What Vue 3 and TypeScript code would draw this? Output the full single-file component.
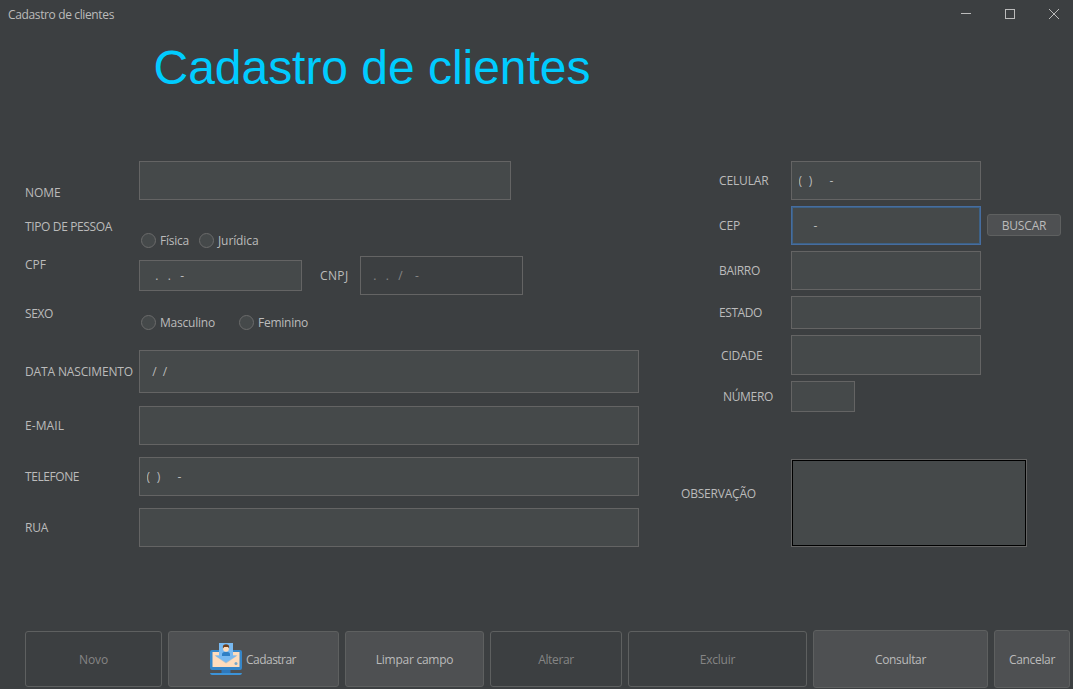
<script setup lang="ts">
import { ref } from 'vue'

// Adjusts tracking so that a caption fills the given advance width.
const vFit = {
  mounted(el: HTMLElement, binding: { value: number }) {
    const natural = el.getBoundingClientRect().width
    const count = (el.textContent ?? '').length
    if (count > 0) el.style.letterSpacing = `${((binding.value - natural) / count).toFixed(3)}px`
  },
}

interface Action {
  id: string
  text: string
  width: number
  disabled?: boolean
  icon?: boolean
}

const actions: Action[] = [
  { id: 'novo', text: 'Novo', width: 29, disabled: true },
  { id: 'cadastrar', text: 'Cadastrar', width: 50, icon: true },
  { id: 'limpar', text: 'Limpar campo', width: 77.5 },
  { id: 'alterar', text: 'Alterar', width: 35.5, disabled: true },
  { id: 'excluir', text: 'Excluir', width: 35.5, disabled: true },
  { id: 'consultar', text: 'Consultar', width: 51 },
  { id: 'cancelar', text: 'Cancelar', width: 46 },
]

const nome = ref('')
const cpf = ref('   .   .   -  ')
const cnpj = ref('  .   .   /    -  ')
const nascimento = ref('  /  /    ')
const email = ref('')
const telefone = ref('(  )     -    ')
const rua = ref('')
const celular = ref('(  )     -    ')
const cep = ref('     -   ')
const bairro = ref('')
const estado = ref('')
const cidade = ref('')
const numero = ref('')
const observacao = ref('')
</script>

<template>
  <div class="window">
    <header class="titlebar">
      <span v-fit="106" class="caption">Cadastro de clientes</span>
      <div class="controls">
        <svg viewBox="0 0 44 28"><path d="M17 13.5h10" /></svg>
        <svg viewBox="0 0 44 28"><rect x="17.5" y="9.5" width="9" height="9" /></svg>
        <svg viewBox="0 0 44 28"><path d="M17 9l10 10M27 9l-10 10" /></svg>
      </div>
    </header>

    <h1>Cadastro de clientes</h1>

    <main>
      <section class="left">
        <div class="row nome">
          <div class="label"><span v-fit="35.5">NOME</span></div>
          <input v-model="nome" type="text" />
        </div>
        <div class="row tipo">
          <div class="label"><span v-fit="87">TIPO DE PESSOA</span></div>
          <label class="radio fisica"><i></i><span v-fit="29">Física</span></label>
          <label class="radio"><i></i><span v-fit="40.5">Jurídica</span></label>
        </div>
        <div class="row docs">
          <div class="label"><span v-fit="21">CPF</span></div>
          <input v-model="cpf" class="cpf" type="text" />
          <div class="label cnpj-label"><span v-fit="28.5">CNPJ</span></div>
          <input v-model="cnpj" class="cnpj" type="text" disabled />
        </div>
        <div class="row sexo">
          <div class="label"><span v-fit="28">SEXO</span></div>
          <label class="radio masc"><i></i><span v-fit="55">Masculino</span></label>
          <label class="radio"><i></i><span v-fit="50">Feminino</span></label>
        </div>
        <div class="row data">
          <div class="label"><span v-fit="108">DATA NASCIMENTO</span></div>
          <input v-model="nascimento" type="text" />
        </div>
        <div class="row email">
          <div class="label"><span v-fit="39">E-MAIL</span></div>
          <input v-model="email" type="text" />
        </div>
        <div class="row line">
          <div class="label"><span v-fit="54">TELEFONE</span></div>
          <input v-model="telefone" class="phone" type="text" />
        </div>
        <div class="row line">
          <div class="label"><span v-fit="23">RUA</span></div>
          <input v-model="rua" type="text" />
        </div>
      </section>

      <section class="right">
        <div class="row">
          <div class="label"><span v-fit="49.5">CELULAR</span></div>
          <input v-model="celular" class="phone" type="text" />
        </div>
        <div class="row">
          <div class="label"><span v-fit="21">CEP</span></div>
          <input v-model="cep" class="focused" type="text" />
          <button class="buscar" type="button"><span v-fit="44.5">BUSCAR</span></button>
        </div>
        <div class="row">
          <div class="label"><span v-fit="41">BAIRRO</span></div>
          <input v-model="bairro" type="text" />
        </div>
        <div class="row estado">
          <div class="label"><span v-fit="43">ESTADO</span></div>
          <input v-model="estado" type="text" />
        </div>
        <div class="row cidade">
          <div class="label"><span v-fit="41.5">CIDADE</span></div>
          <input v-model="cidade" type="text" />
        </div>
        <div class="row numero">
          <div class="label"><span v-fit="50">NÚMERO</span></div>
          <input v-model="numero" type="text" />
        </div>
        <div class="row obs">
          <div class="label"><span v-fit="75">OBSERVAÇÃO</span></div>
          <textarea v-model="observacao"></textarea>
        </div>
      </section>
    </main>

    <footer>
      <button v-for="a in actions" :key="a.id" type="button" :class="a.id" :disabled="a.disabled">
        <svg v-if="a.icon" class="icon" viewBox="0 0 32 32">
          <rect x="0" y="7" width="32" height="20" rx="2" fill="#3586c9" />
          <rect x="2.5" y="9" width="27" height="15" fill="#ffdcbc" />
          <rect x="11.5" y="27" width="9" height="3" fill="#2e78bb" />
          <path d="M0 30h32q-.4 2-2 2H2q-1.600 0-2-2z" fill="#3c93d8" />
          <path d="M4.500 12.500L16 20.500l11.500-8z" fill="#b9c4c8" />
          <path d="M9 0h14v12.500h4L16 19.500 5 12.500h4z" fill="#78b9f1" />
          <path d="M12 13v-1.500Q12 9 14.500 9h3Q20 9 20 11.500V13z" fill="#2f7fc5" />
          <ellipse cx="16" cy="5.500" rx="2.900" ry="3.300" fill="#ffdcbc" />
          <path d="M12.900 5.500V3Q13.300 1.200 16 1.200T19.100 3v2.500L18 3.900h-3.700z" fill="#70401c" />
          <circle cx="26" cy="20.500" r="1.500" fill="#79a7c9" />
        </svg>
        <span v-fit="a.width">{{ a.text }}</span>
      </button>
    </footer>
  </div>
</template>

<style>
html,
body {
  margin: 0;
  background: #3c3f41;
  overflow: hidden;
}
</style>

<style scoped>
* {
  box-sizing: border-box;
}
.window {
  width: 1073px;
  height: 689px;
  overflow: hidden;
  display: flex;
  flex-direction: column;
  background: #3c3f41;
  color: #bbbbbb;
  font: 12px/16px 'Open Sans', 'Noto Sans', sans-serif;
}
span {
  white-space: nowrap;
}
.titlebar {
  height: 30px;
  flex: none;
  display: flex;
  justify-content: space-between;
  padding-left: 8px;
}
.caption {
  margin-top: 7px;
  align-self: flex-start;
}
.controls {
  display: flex;
  margin-right: -3px;
}
.controls svg {
  width: 44px;
  height: 28px;
  fill: none;
  stroke: #bbbbbb;
  stroke-width: 1;
}
h1 {
  margin: 10px 0 0 153.5px;
  height: 121px;
  flex: none;
  font: 400 48px/56px 'Liberation Sans', Arial, sans-serif;
  letter-spacing: -0.03px;
  color: #00ccff;
}
main {
  display: flex;
  height: 469px;
  flex: none;
}
.left {
  width: 657px;
  padding-left: 25px;
}
.right {
  width: 416px;
  padding-left: 24px;
}
.row {
  display: flex;
  align-items: flex-start;
}
.label {
  flex: none;
}
.left .label {
  width: 114px;
  margin-top: 12px;
}
.right .label {
  width: 110px;
  padding-left: 38px;
  margin-top: 12px;
}
input,
textarea {
  display: block;
  margin: 0;
  height: 39px;
  padding: 0 6px;
  border: 1px solid #646464;
  border-radius: 0;
  outline: none;
  background: #45494a;
  color: #bbbbbb;
  font: inherit;
  resize: none;
}
.phone {
  padding-left: 6.500px;
  word-spacing: 0.3px;
}
.left input {
  width: 500px;
}
.right input {
  width: 190px;
}
.right .row {
  margin-bottom: 6px;
}
.nome {
  height: 39px;
}
.row.nome .label {
  margin-top: 24px;
}
.left .nome input {
  width: 372px;
}
.tipo {
  height: 31px;
  margin-top: 18px;
}
.row.tipo .label,
.row.sexo .label {
  margin-top: 1px;
}
.radio {
  display: flex;
  align-items: flex-start;
  height: 16px;
}
.radio i {
  width: 15px;
  height: 15px;
  margin: 0 4px 0 2px;
  border: 1px solid #6b6b6b;
  border-radius: 50%;
  background: #45494a;
}
.tipo .radio {
  margin-top: 15px;
}
.fisica {
  width: 58px;
}
.docs {
  margin-top: 7px;
}
.row.docs .label {
  margin-top: 1px;
}
.left .docs .cpf {
  width: 163px;
  height: 31px;
  margin-top: 4px;
}
.row.docs .cnpj-label {
  width: 58px;
  padding-left: 18px;
  margin-top: 12px;
}
.left .docs .cnpj {
  width: 163px;
}
input:disabled {
  background: #3c3f41;
  color: #858585;
}
.sexo {
  height: 26px;
  margin-top: 10px;
}
.sexo .radio {
  margin-top: 10px;
}
.masc {
  width: 98px;
}
.data {
  margin-top: 19px;
}
.row.data .label {
  margin-top: 14px;
}
.data input {
  height: 43px;
}
.email {
  margin-top: 13px;
}
.line {
  margin-top: 12px;
}
.right input.focused {
  border-color: #466da0;
  box-shadow: inset 0 0 0 1px #3d6185;
}
.row.estado .label {
  margin-top: 9px;
}
.estado input {
  height: 33px;
}
.row.cidade .label {
  margin-top: 13px;
  padding-left: 40px;
}
.cidade input {
  height: 40px;
}
.row.numero .label {
  margin-top: 8px;
  padding-left: 42px;
}
.right .numero input {
  width: 64px;
  height: 31px;
}
.row.obs {
  margin-top: 47px;
}
.row.obs .label {
  margin-top: 27px;
  padding-left: 0;
}
textarea {
  width: 236px;
  height: 88px;
  box-shadow: inset 0 0 0 1px #000;
}
button {
  display: flex;
  align-items: center;
  justify-content: center;
  margin: 0;
  padding: 0;
  border: 1px solid #5e6060;
  border-radius: 3px;
  background: #4e5052;
  color: #bbbbbb;
  font: inherit;
}
button span {
  padding-top: 2px;
}
button:disabled {
  background: #3c3f41;
  color: #858585;
}
.buscar {
  width: 74px;
  height: 22px;
  margin: 8px 0 0 6px;
}
footer {
  display: flex;
  align-items: center;
  gap: 6px;
  height: 58px;
  flex: none;
  padding-left: 25px;
}
footer button {
  flex: none;
  height: 56px;
}
.novo {
  width: 137px;
}
.cadastrar {
  width: 171px;
  gap: 4px;
  padding-right: 1px;
}
.limpar {
  width: 139px;
}
.alterar {
  width: 132px;
}
.excluir {
  width: 179px;
}
footer .consultar {
  width: 175px;
  height: 58px;
}
footer .cancelar {
  width: 76px;
  height: 58px;
}
.icon {
  width: 32px;
  height: 32px;
}
</style>
